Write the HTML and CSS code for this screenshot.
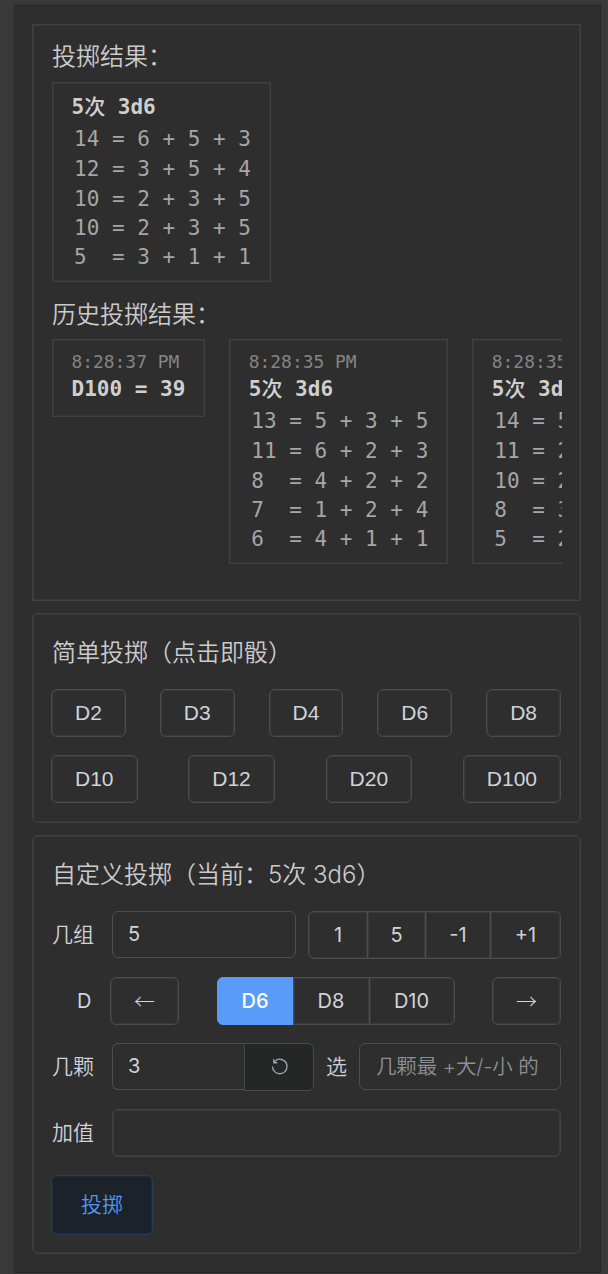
FILE: index.html
```html
<!DOCTYPE html>
<html lang="zh-CN">
<head>
<meta charset="utf-8">
<title>投掷</title>
<link rel="stylesheet" href="styles.css">
</head>
<body>
<main class="panel">
  <section class="card results">
    <h2 class="result-title">投掷结果：</h2>
    <div class="roll">
      <b class="roll-name">5<span class="han">次</span> 3d6</b>
      <pre class="roll-line">14 = 6 + 5 + 3</pre>
      <pre class="roll-line">12 = 3 + 5 + 4</pre>
      <pre class="roll-line">10 = 2 + 3 + 5</pre>
      <pre class="roll-line tight">10 = 2 + 3 + 5</pre>
      <pre class="roll-line tight">5  = 3 + 1 + 1</pre>
    </div>
    <h2 class="result-title history-title">历史投掷结果：</h2>
    <div class="history">
      <div class="roll">
        <time class="roll-time">8:28:37 PM</time>
        <b class="roll-name">D100 = 39</b>
      </div>
      <div class="roll">
        <time class="roll-time">8:28:35 PM</time>
        <b class="roll-name">5<span class="han">次</span> 3d6</b>
        <pre class="roll-line">13 = 5 + 3 + 5</pre>
        <pre class="roll-line">11 = 6 + 2 + 3</pre>
        <pre class="roll-line">8  = 4 + 2 + 2</pre>
        <pre class="roll-line tight">7  = 1 + 2 + 4</pre>
        <pre class="roll-line tight">6  = 4 + 1 + 1</pre>
      </div>
      <div class="roll">
        <time class="roll-time">8:28:35 PM</time>
        <b class="roll-name">5<span class="han">次</span> 3d6</b>
        <pre class="roll-line">14 = 5 + 5 + 4</pre>
        <pre class="roll-line">11 = 2 + 4 + 5</pre>
        <pre class="roll-line">10 = 2 + 3 + 5</pre>
        <pre class="roll-line tight">8  = 3 + 1 + 4</pre>
        <pre class="roll-line tight">5  = 2 + 1 + 2</pre>
      </div>
    </div>
  </section>

  <section class="card round simple">
    <h2 class="title">简单投掷（点击即骰）</h2>
    <div class="dice-row">
      <button class="btn">D2</button><button class="btn">D3</button><button class="btn">D4</button><button class="btn">D6</button><button class="btn">D8</button>
    </div>
    <div class="dice-row">
      <button class="btn">D10</button><button class="btn">D12</button><button class="btn">D20</button><button class="btn">D100</button>
    </div>
  </section>

  <section class="card round custom">
    <h2 class="title">自定义投掷（当前：5次 3d6）</h2>
    <div class="form-row">
      <label class="label">几组</label>
      <input class="input groups" value="5">
      <div class="btn-group counts">
        <button class="btn c1">1</button><button class="btn c2">5</button><button class="btn c3">-1</button><button class="btn c4">+1</button>
      </div>
    </div>
    <div class="form-row faces">
      <label class="label">D</label>
      <button class="btn arrow">←</button>
      <div class="btn-group radio">
        <button class="btn active">D6</button><button class="btn">D8</button><button class="btn last">D10</button>
      </div>
      <button class="btn arrow">→</button>
    </div>
    <div class="form-row">
      <label class="label">几颗</label>
      <div class="append-group">
        <input class="input" value="3">
        <button class="append" aria-label="reset">
          <svg class="icon" viewBox="0 0 1024 1024"><path fill="currentColor" d="M289.088 296.704h92.992a32 32 0 0 1 0 64H232.96a32 32 0 0 1-32-32V179.712a32 32 0 0 1 64 0v50.56a384 384 0 0 1 643.84 282.88 384 384 0 0 1-383.936 384 384 384 0 0 1-384-384h64a320 320 0 1 0 640 0 320 320 0 0 0-555.712-216.448z"/></svg>
        </button>
      </div>
      <span class="pick">选</span>
      <input class="input keep" placeholder="几颗最 +大/-小 的">
    </div>
    <div class="form-row">
      <label class="label">加值</label>
      <input class="input bonus">
    </div>
    <button class="submit">投掷</button>
  </section>
</main>
</body>
</html>
```

FILE: styles.css
```css
* { box-sizing: border-box; }

body {
  margin: 0;
  height: 1274px;
  padding: 5px 7px 1px 14px;
  overflow: hidden;
  background: #3a3a3a;
  color: #cfd3dc;
  font-family: Inter, "Noto Sans CJK SC", sans-serif;
  font-size: 21px;
}

.panel {
  height: 1268px;
  padding: 19px 20px 0 18px;
  background: #2e2e2e;
  box-shadow: inset 0 1px #262626, inset -1px 0 #262626, inset 0 -1px #262626, 0 0 6px rgba(0, 0, 0, .12);
}

.card {
  width: 549px;
  padding: 0 19px 0 18px;
  border: 1px solid #414141;
  box-shadow: inset 0 0 0 1px #373737;
}
.card.round { border-radius: 6px; }
.results { height: 577px; padding-top: 15px; padding-left: 19px; }
.simple { height: 210px; margin-top: 12px; }
.custom { height: 419px; margin-top: 12px; }

.result-title, .title {
  margin: 0;
  font-weight: 350;
  font-size: 24px;
  line-height: 34px;
  color: #cbcbcb;
  white-space: nowrap;
}
.result-title { margin-bottom: 8px; }
.history-title { margin-top: 16px; margin-bottom: 7px; }
.title { margin: 22px 0 19px 1px; }

.roll {
  flex: none;
  width: max-content;
  padding: 11px 19px 10px 18.5px;
  border: 1px solid #404040;
  box-shadow: inset 0 0 0 1px #353535;
  font-family: "DejaVu Sans Mono", "Noto Sans CJK SC", monospace;
}
.roll-name {
  display: block;
  height: 29px;
  line-height: 27px;
  color: #cfcfcf;
  white-space: pre;
}
.han { font-weight: 500; }
.roll-line {
  margin: 0;
  padding: 0 0 0 2.5px;
  height: 30px;
  line-height: 32px;
  font-family: inherit;
  color: #a6a6a6;
}
.roll-line.tight { height: 29px; line-height: 31px; }
.roll-time {
  display: block;
  height: 25px;
  line-height: 22px;
  font-size: 17.9px;
  color: #858585;
}
.history {
  display: flex;
  align-items: flex-start;
  gap: 24px;
  width: 510px;
  overflow: hidden;
}
.history .roll:first-child { padding-bottom: 11px; }

.btn {
  height: 48px;
  padding: 0 23px;
  border: 1px solid #4c4c4c;
  border-radius: 6px;
  box-shadow: inset 0 0 0 1px #393939;
  background: transparent;
  color: #cfd3dc;
  font: 21px "Liberation Sans", "Noto Sans CJK SC", sans-serif;
}
.dice-row {
  display: flex;
  justify-content: space-between;
  width: 510px;
}
.dice-row + .dice-row { margin-top: 18px; }

.form-row {
  display: flex;
  align-items: center;
  width: 510px;
  height: 48px;
  margin-bottom: 18px;
}
.label { flex: none; width: 61px; font-weight: 350; padding: 0 0 4px 1px; }
.faces .label { width: 59px; padding: 0 0 1px 26px; font-weight: 400; font-size: 20px; }

.input {
  min-width: 0;
  height: 47px;
  padding: 0 15px 1px;
  border: 1px solid #4c4d4f;
  border-radius: 6px;
  background: transparent;
  color: #cfd3dc;
  font: 400 20px Inter, "Noto Sans CJK SC", sans-serif;
}
.form-row .input { margin-bottom: 1px; }
.input::placeholder { color: #8d9095; opacity: 1; font-weight: 350; }
.groups { width: 185px; }
.keep { width: 202px; padding-left: 16px; font-size: 20.5px; letter-spacing: -.15px; }
.form-row .bonus { width: 449px; height: 48px; margin-bottom: 0; border-color: #434343; box-shadow: inset 0 0 0 1px #3a3a3a; }

.btn-group { display: flex; }
.btn-group .btn {
  padding: 0 0 1px;
  border-radius: 0;
  font: 20px Inter, "Noto Sans CJK SC", sans-serif;
}
.btn-group .btn + .btn { margin-left: -1px; }
.btn-group .btn:first-child { border-radius: 6px 0 0 6px; }
.btn-group .btn:last-child { border-radius: 0 6px 6px 0; }
.counts { margin-left: 12px; }
.c1 { width: 60px; }
.c2 { width: 59px; }
.c3 { width: 66px; }
.c4 { width: 71px; }

.arrow { flex: none; width: 69px; padding: 0 0 3px; font-family: "Noto Sans CJK SC", sans-serif; font-weight: 300; }
.radio { margin: 0 auto; }
.radio .btn { width: 77px; padding-bottom: 0; }
.radio .btn.last { width: 86px; }
.radio .btn.active {
  background: #599bf8;
  border-color: #599bf8;
  box-shadow: none;
  color: #fff;
  font-weight: 500;
}

.append-group { display: flex; align-items: center; width: 202px; }
.append-group .input { flex: 1; border-radius: 6px 0 0 6px; border-right: 0; }
.append {
  display: flex;
  align-items: center;
  justify-content: center;
  width: 70px;
  height: 48px;
  padding: 0 0 1px;
  border: 1px solid #484a4a;
  border-radius: 0 6px 6px 0;
  background: #252727;
  color: #a3a6ad;
}
.icon { width: 21px; height: 21px; }
.pick { width: 45px; padding: 0 0 4px 12px; font-weight: 350; color: #cfcfcf; }

.submit {
  display: block;
  width: 102px;
  height: 60px;
  padding: 0 0 5px;
  border: 1px solid #263c5e;
  border-radius: 6px;
  box-shadow: inset 0 0 0 1px #1e2b3c;
  background: #1b222a;
  color: #5596f2;
  font: 350 21px "Noto Sans CJK SC", sans-serif;
}
```
